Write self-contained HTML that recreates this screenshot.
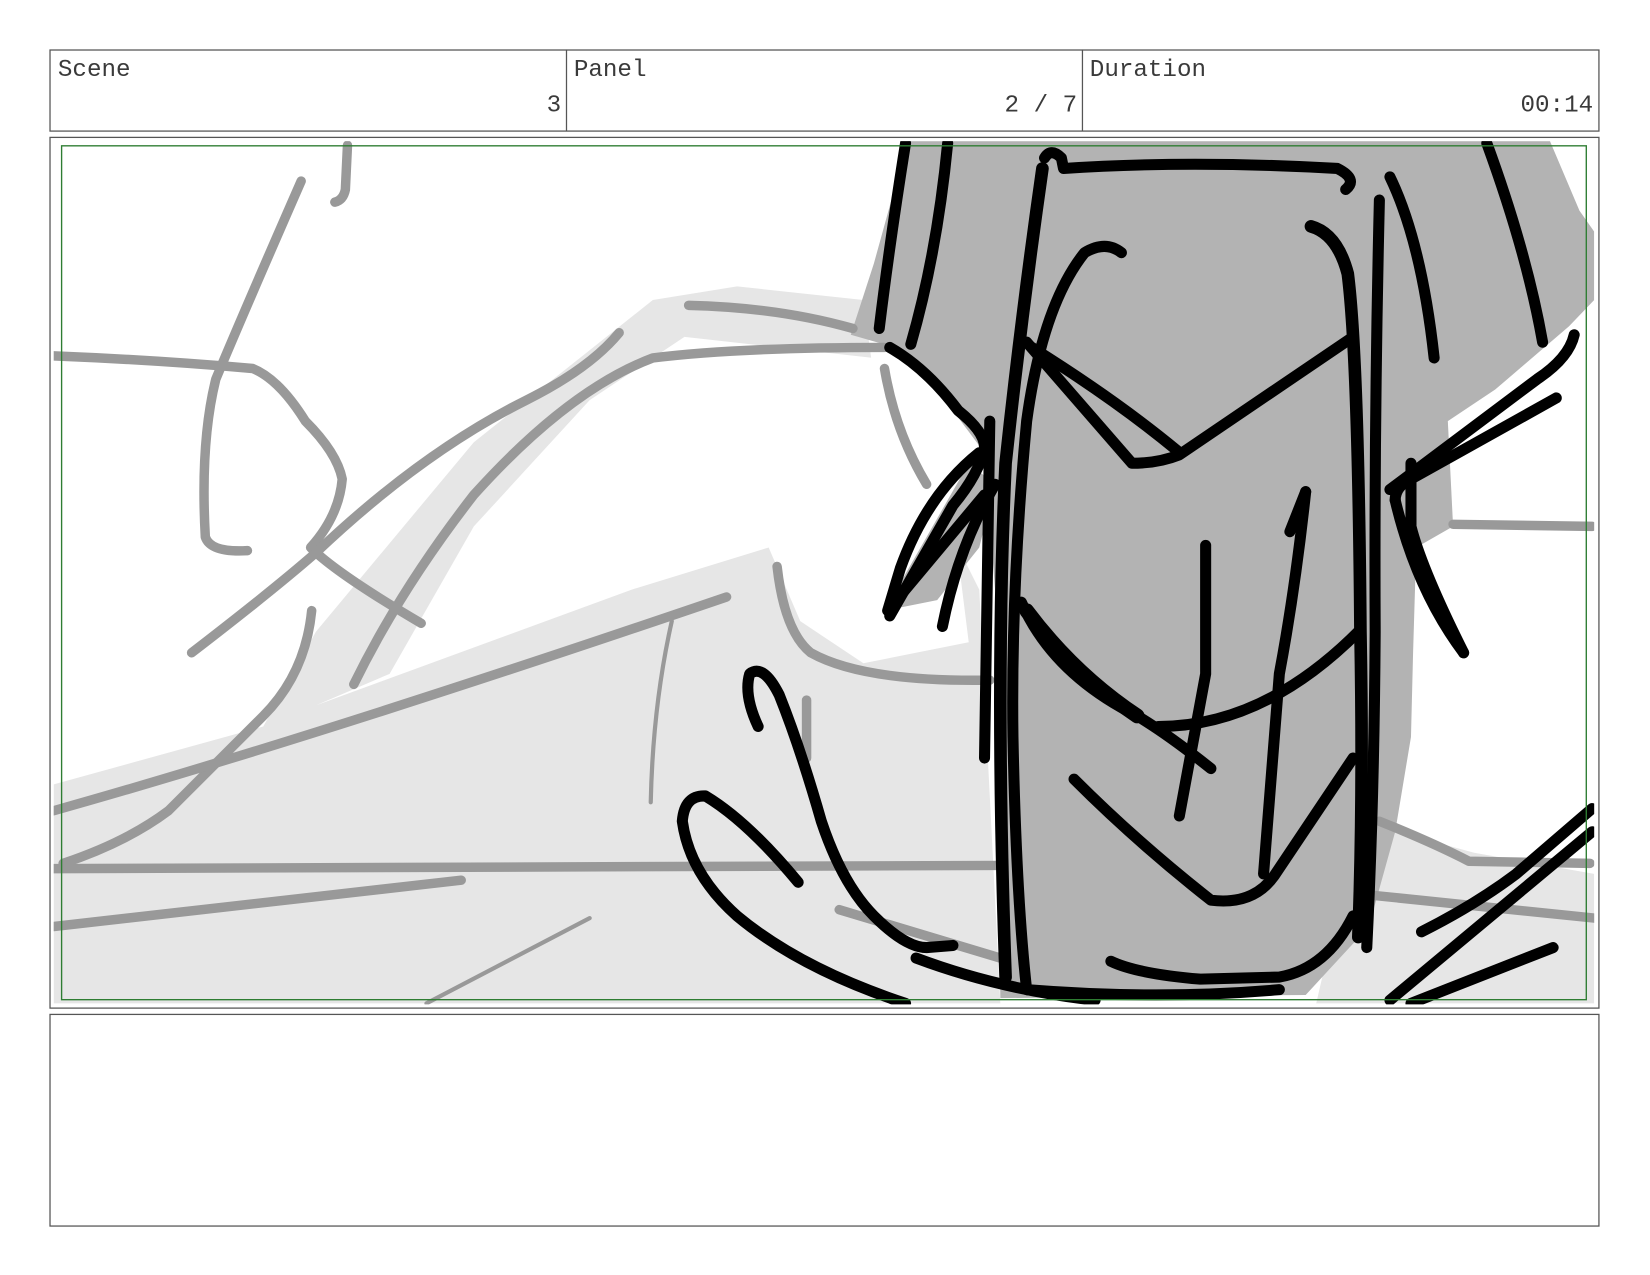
<!DOCTYPE html>
<html><head><meta charset="utf-8"><style>
html,body{margin:0;padding:0;background:#fff;width:1650px;height:1275px;overflow:hidden}
svg{display:block}
text{font-family:"Liberation Mono",monospace;font-size:23px;fill:#3a3a3a}
</style></head><body>
<svg width="1650" height="1275" viewBox="0 0 1567 1211" preserveAspectRatio="none">
<rect width="1567" height="1211" fill="#fff"/>
<rect x="47.5" y="47.5" width="1471" height="77" fill="none" stroke="#555" stroke-width="1.2"/>
<line x1="538" y1="47" x2="538" y2="124" stroke="#555" stroke-width="1.2"/>
<line x1="1028" y1="47" x2="1028" y2="124" stroke="#555" stroke-width="1.2"/>
<text x="55" y="72">Scene</text>
<text x="545" y="72">Panel</text>
<text x="1035" y="72">Duration</text>
<text x="533" y="106" text-anchor="end">3</text>
<text x="1023" y="106" text-anchor="end">2 / 7</text>
<text x="1513" y="106" text-anchor="end">00:14</text>
<rect x="47.5" y="130.5" width="1471" height="827" fill="none" stroke="#555" stroke-width="1.2"/>
<defs><clipPath id="c"><rect x="51" y="134" width="1463" height="820"/></clipPath></defs>
<g clip-path="url(#c)" stroke-linecap="round" stroke-linejoin="round" fill="none">
<path fill="#e6e6e6" stroke="none" d="M51,745 L250,690 L300,600 L450,420 L620,285 L700,272 L820,285 L830,360 L880,460 L930,560 L950,953 L51,953Z"/>
<path fill="#e6e6e6" stroke="none" d="M1290,780 L1400,810 L1514,830 L1514,953 L1250,953Z"/>
<path fill="#fff" stroke="none" d="M370,640 L450,500 L560,380 L650,320 L830,340 L860,430 L905,490 L920,610 L820,630 L760,590 L730,520 L600,560 L300,670Z"/>
<path fill="#b3b3b3" stroke="none" d="M862,134 L1472,134 L1500,200 L1514,220 L1514,285 L1490,310 L1420,370 L1375,400 L1380,500 L1345,520 L1342,620 L1340,700 L1325,790 L1300,880 L1240,945 L950,948 L945,560 L935,430 L890,370 L850,330 L808,318 L830,250Z"/>
<path fill="#b3b3b3" stroke="none" d="M840,580 L920,440 L945,460 L930,520 L890,570Z"/>
<g stroke="#999" stroke-width="9">
<path d="M330,138 L328,180 Q326,190 318,192"/>
<path d="M286,172 Q230,300 205,360 Q190,420 195,510 Q200,525 235,523"/>
<path d="M51,338 Q150,342 240,350 Q265,360 290,400 Q320,430 325,455 Q322,490 295,520 Q320,545 400,592"/>
<path d="M182,620 Q260,560 300,525 Q400,430 500,380 Q560,350 588,316"/>
<path d="M336,650 Q380,560 450,470 Q540,370 620,340 Q700,330 840,330"/>
<path d="M654,290 Q740,292 810,312"/>
<path d="M296,580 Q290,640 250,680 Q200,730 160,770 Q120,800 60,820"/>
<path d="M51,770 Q300,700 690,567"/>
<path d="M51,825 L950,822"/>
<path d="M51,880 L438,836"/>
<path d="M738,538 Q745,600 770,620 Q820,648 940,646"/>
<path d="M840,350 Q850,410 880,460"/>
<path d="M766,665 L766,720"/>
<path d="M797,864 L950,910"/>
<path d="M1310,780 Q1360,800 1395,818 L1510,820"/>
<path d="M1300,850 L1514,872"/>
<path d="M1380,498 L1512,500"/>
</g>
<g stroke="#999" stroke-width="4">
<path d="M638,590 Q620,670 618,762"/>
<path d="M405,953 L560,872"/>
</g>
<g stroke="#000" stroke-width="10.5">
<path d="M860,136 Q845,230 835,312"/>
<path d="M900,136 Q890,240 865,327"/>
<path d="M992,150 Q998,140 1008,150 L1010,160 Q1130,152 1270,160 Q1290,170 1278,180"/>
<path d="M1065,240 Q1050,228 1030,240 Q990,290 975,400 Q960,560 962,700 Q965,850 975,940 Q1100,950 1215,940"/>
<path d="M1310,190 Q1305,400 1306,600 Q1305,760 1298,900"/>
<path d="M1320,168 Q1350,230 1362,340"/>
<path d="M1412,136 Q1450,240 1465,325"/>
<path d="M1495,318 Q1490,340 1460,360 L1320,465"/>
<path d="M1478,378 L1340,455 Q1325,462 1325,475"/>
<path d="M845,330 Q880,350 910,390 Q935,410 935,425 Q930,450 905,480 L845,585"/>
<path d="M930,430 Q880,470 855,540 L843,580 L935,470"/>
<path d="M945,460 Q910,520 895,595"/>
<path d="M940,400 L935,720"/>
<path d="M975,325 L1075,440 Q1100,440 1120,432 L1285,320"/>
<path d="M980,330 Q1060,380 1118,428"/>
<path d="M970,572 Q1000,640 1080,680 Q1110,698 1150,730"/>
<path d="M1020,740 Q1080,800 1150,855 Q1190,860 1210,832 L1285,720"/>
<path d="M1145,518 L1145,640 L1120,775"/>
<path d="M1240,467 Q1230,560 1215,640 L1200,830"/>
<path d="M1225,505 L1240,467"/>
<path d="M1100,690 Q1200,690 1290,600"/>
<path d="M1340,440 L1340,500 Q1350,540 1390,620"/>
<path d="M1325,475 Q1345,560 1390,620"/>
<path d="M720,690 Q706,660 712,640 Q725,630 740,660 Q760,710 780,780 Q800,840 830,870 Q860,900 880,900 L905,898"/>
<path d="M758,838 Q710,780 670,756 Q650,755 648,780 Q655,830 700,870 Q760,920 860,953"/>
<path d="M870,910 Q950,940 1040,950"/>
<path d="M1055,913 Q1080,925 1140,930 L1215,928 Q1260,920 1285,870"/>
<path d="M1512,768 L1440,830 Q1400,860 1350,885"/>
<path d="M1512,790 L1320,950"/>
<path d="M1475,900 L1340,953"/>
</g>
<g stroke="#000" stroke-width="12">
<path d="M990,160 Q970,300 955,440 Q945,650 955,928"/>
<path d="M1245,215 Q1270,222 1280,260 Q1290,340 1292,600 Q1295,760 1290,890"/>
</g>
<g stroke="#000" stroke-width="14"><path d="M975,580 Q1020,640 1080,680"/></g>
</g>
<rect x="58.5" y="138.5" width="1448" height="811" fill="none" stroke="#2e7d32" stroke-width="1.3"/>
<rect x="47.5" y="963.5" width="1471" height="201" fill="none" stroke="#555" stroke-width="1.2"/>
</svg>
</body></html>
